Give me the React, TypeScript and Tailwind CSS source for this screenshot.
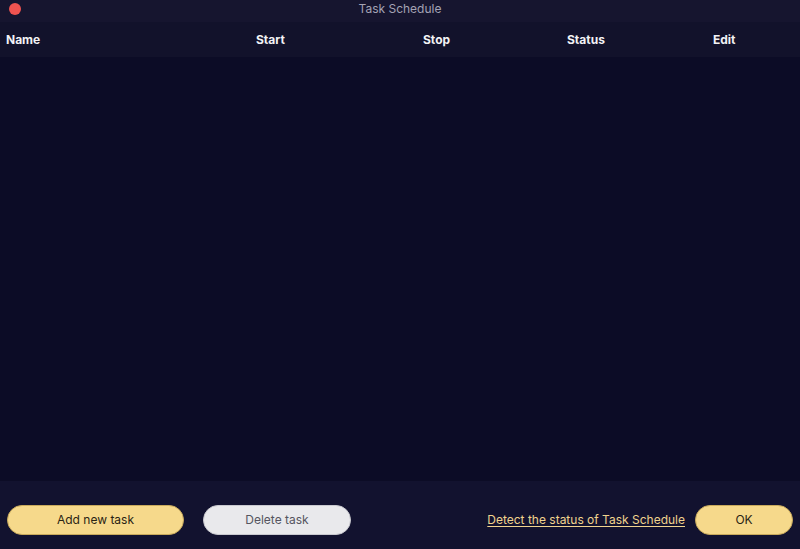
import React from "react";

export default function App() {
  return (
    <div
      className="w-[800px] h-[549px] flex flex-col bg-[#0c0c26] overflow-hidden"
      style={{ fontFamily: '"Inter", "Liberation Sans", sans-serif' }}
    >
      <div className="relative h-[22px] shrink-0 bg-[#16152f] flex items-center justify-center">
        <div className="absolute left-[9px] top-[3px] w-[12px] h-[12px] rounded-full bg-[#ef5350]" />
        <span className="text-[12px] text-[#a4a3b4] leading-none -mt-[4px]">Task Schedule</span>
      </div>
      <div className="h-[35px] shrink-0 bg-[#12122b] grid grid-cols-[250px_167px_144px_146px_1fr] items-center pl-[6px] text-[12px] font-bold text-[#f2f2f5]">
        <span>Name</span>
        <span>Start</span>
        <span>Stop</span>
        <span>Status</span>
        <span>Edit</span>
      </div>
      <div className="flex-1 bg-[#0c0c26]" />
      <div className="h-[68px] shrink-0 bg-[#12122f] flex items-start pt-[24px] px-[7px] text-[12px]">
        <button className="w-[177px] h-[30px] rounded-full bg-[#f6d98b] border border-[#c9aa5c] text-[#2a2414]">
          Add new task
        </button>
        <button className="ml-[19px] w-[148px] h-[30px] rounded-full bg-[#e9e9ec] border border-[#c9c9cf] text-[#555560]">
          Delete task
        </button>
        <div className="flex-1" />
        <span className="h-[30px] flex items-center text-[#f0d38e] underline underline-offset-2">
          Detect the status of Task Schedule
        </span>
        <button className="ml-[10px] w-[98px] h-[30px] rounded-full bg-[#f6d98b] border border-[#c9aa5c] text-[#2a2414]">
          OK
        </button>
      </div>
    </div>
  );
}
